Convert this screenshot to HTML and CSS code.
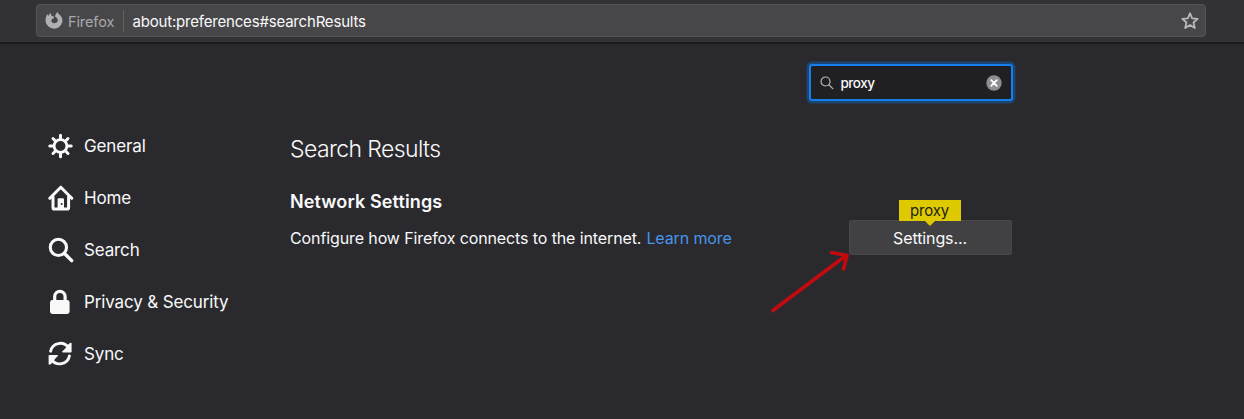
FILE: index.html
```html
<!DOCTYPE html>
<html lang="en">
<head>
<meta charset="utf-8">
<title>Preferences</title>
<link rel="stylesheet" href="styles.css">
</head>
<body>
<header class="toolbar">
  <div class="urlbar">
    <svg class="firefox" width="18" height="18" viewBox="0 0 18 18"><path fill="#b0b0b2" fill-rule="evenodd" d="M2.1 2.2 3.7 3.7 5.3.8 6.8 4 9.2 4.8 8.8 6.2 7 7 6.2 9.2A3.5 3.5 0 0 0 12.8 8.7C12.9 6.6 11.6 5.4 10.1 4.8 10.2 2.7 11 1.1 12.7 0 13 1.5 14 2.3 15.1 3.3 16.8 4.9 17.6 7 17.4 9.5A8.5 8.5 0 0 1 .6 9.4C.4 6.6.9 4.4 2.1 2.2Z"/></svg>
    <span class="brand">Firefox</span>
    <span class="divider"></span>
    <span class="url">about:preferences#searchResults</span>
    <svg class="star" width="18" height="18" viewBox="0 0 18 18"><path fill="none" stroke="#b9b9bb" stroke-width="1.8" stroke-linejoin="round" d="m9 1.3 2.2 5 5.5.5-4.2 3.7 1.3 5.5L9 13.1 4.2 16l1.3-5.5L1.3 6.8l5.5-.5Z"/></svg>
  </div>
</header>
<div class="page">
  <nav class="sidebar">
    <a class="item"><svg width="26" height="26" viewBox="0 0 26 26" fill="none" stroke="#f9f9fa" stroke-width="3" stroke-linecap="round"><circle cx="12.5" cy="13" r="6.4" stroke-width="2.8"/><path d="M12.5 5.5V2.3M12.5 20.5v3.2M5 13H1.8M20 13h3.2M7.2 7.7 5 5.5M17.8 7.7 20 5.5M7.2 18.3 5 20.5M17.8 18.3l2.2 2.2"/></svg><span>General</span></a>
    <a class="item"><svg width="26" height="26" viewBox="0 0 26 26" fill="none" stroke="#f9f9fa" stroke-width="3" stroke-linecap="round" stroke-linejoin="round"><path d="M1.8 13.3 12.8 2.2l11 11.1M5 11.5v11.2q0 1.3 1.3 1.3h13q1.3 0 1.3-1.3V11.5"/><path fill="#f9f9fa" stroke="none" d="M9.6 24V14.5q0-1.2 1.2-1.2h4q1.2 0 1.2 1.2V24Z"/><circle cx="13.7" cy="18.9" r="1" fill="#2a2a2e" stroke="none"/></svg><span>Home</span></a>
    <a class="item"><svg width="26" height="26" viewBox="0 0 26 26" fill="none" stroke="#f9f9fa" stroke-width="3.1" stroke-linecap="round"><circle cx="10.4" cy="10.4" r="8.1"/><path stroke-width="3.4" d="m16.5 16.5 7.2 7.1"/></svg><span>Search</span></a>
    <a class="item"><svg width="26" height="26" viewBox="0 0 26 26"><rect x="2" y="11.1" width="19.6" height="13.8" rx="2.4" fill="#f9f9fa"/><path fill="none" stroke="#f9f9fa" stroke-width="3.2" d="M6.7 12V7.6a5.2 5.2 0 0 1 10.4 0V12"/></svg><span>Privacy &amp; Security</span></a>
    <a class="item"><svg width="26" height="26" viewBox="0 0 26 26" fill="none" stroke="#f9f9fa" stroke-width="2.9" stroke-linecap="round"><path d="M2.6 10.2A9.9 9.9 0 0 1 20.4 6.6M21.4 15A9.9 9.9 0 0 1 3.6 18.6"/><path fill="#f9f9fa" stroke="none" d="M23.6 2.4v8.3q0 .7-.7.7H14.9q-1.5 0-.5-1.1l2.6-2.6 3.6-4.8q3-2.1 3-.5ZM.6 23v-8.3q0-.7.7-.7h8q1.5 0 .5 1.1l-2.6 2.6-3.6 4.8q-3 2.1-3 .5Z"/></svg><span>Sync</span></a>
  </nav>
  <main class="content">
    <div class="searchbox">
      <svg width="14" height="14" viewBox="0 0 14 14" fill="none" stroke="#bbbbbd" stroke-width="1.2" stroke-linecap="round"><circle cx="5.5" cy="5.5" r="4.5"/><path d="m8.8 8.8 4 3.8"/></svg>
      <span class="query">proxy</span>
      <svg class="clear" width="16" height="16" viewBox="0 0 16 16"><circle cx="8" cy="8" r="7.7" fill="#8e8e90"/><path stroke="#fff" stroke-width="1.8" stroke-linecap="round" d="m5.2 5.2 5.6 5.6M10.8 5.2l-5.6 5.6"/></svg>
    </div>
    <h1>Search Results</h1>
    <h2>Network Settings</h2>
    <div class="row">
      <p><span class="description">Configure how Firefox connects to the internet.</span><a class="learn">Learn more</a></p>
      <div class="settings"><span>Settings...</span><span class="tooltip">proxy</span>
        <svg class="arrow" width="80" height="64" viewBox="0 0 80 64" fill="none" stroke="#c20b0f" stroke-width="3.6"><path d="M1.6 60.5 76 4.5"/><path stroke-linejoin="round" stroke-linecap="round" d="M61.5 1.5 77 4.5l-3.5 13.5"/></svg>
      </div>
    </div>
  </main>
</div>
</body>
</html>
```
FILE: styles.css
```css
* { box-sizing: border-box; }
body { margin: 0; height: 419px; overflow: hidden; background: #2a2a2e; color: #f9f9fa; font-family: Inter, "Liberation Sans", sans-serif; }
.toolbar { height: 44px; padding: 4px 38px 0 36px; background: #323234; border-bottom: 2px solid #1b1b1d; }
.urlbar { height: 33px; display: flex; align-items: center; padding: 0 6px 0 8px; background: #474749; border: 1px solid #555557; border-radius: 4px; font-size: 15px; white-space: nowrap; }
.firefox { flex: none; }
.brand { width: 47px; margin-left: 5px; padding-top: 1px; color: #a9a9ab; font-size: 14.5px; letter-spacing: -0.1px; }
.divider { width: 1px; height: 22px; margin: 0 8.5px 0 8px; background: #626264; }
.url { padding-top: 1px; letter-spacing: -0.19px; }
.star { margin-left: auto; }
.page { display: flex; padding-left: 48px; }
.sidebar { width: 242px; padding-top: 76px; }
.item { height: 52px; display: flex; align-items: center; gap: 10px; font-size: 17px; letter-spacing: -0.14px; white-space: nowrap; }
.content { width: 721.5px; padding-top: 20px; }
.searchbox { width: 204px; height: 37px; display: flex; align-items: center; margin-left: 518.5px; padding: 0 9px; background: #202023; border: 2px solid #1580ec; border-radius: 3px; box-shadow: 0 0 0 2.5px #1d4572; font-size: 13.5px; font-weight: 500; letter-spacing: -0.5px; }
.query { margin-left: 7px; }
.clear { margin-left: auto; }
h1 { margin: 31px 0 0; font-size: 23px; line-height: 34px; font-weight: 350; letter-spacing: -0.6px; }
h2 { margin: 22px 0 0; font-size: 18px; line-height: 27px; font-weight: 600; letter-spacing: 0.12px; }
.row { display: flex; justify-content: space-between; margin-top: 5px; white-space: nowrap; }
.row p { margin: 0; font-size: 16px; line-height: 36px; letter-spacing: -0.11px; }
.learn { margin-left: 5px; color: #4795e8; }
.settings { position: relative; width: 163px; height: 35px; display: flex; align-items: center; justify-content: center; background: #414143; border: 1px solid #48484a; border-radius: 2px; font-size: 16px; letter-spacing: -0.1px; }
.tooltip { position: absolute; top: -21px; left: 49px; width: 62px; height: 21px; background: #dfc900; color: #1d1d1d; font-size: 15px; line-height: 22px; letter-spacing: -0.2px; text-align: center; }
.tooltip::after { content: ""; position: absolute; top: 20px; left: 25px; border: 6px solid transparent; border-top-color: #dfc900; border-bottom: 0; }
.arrow { position: absolute; left: -79.5px; top: 30px; }
```
